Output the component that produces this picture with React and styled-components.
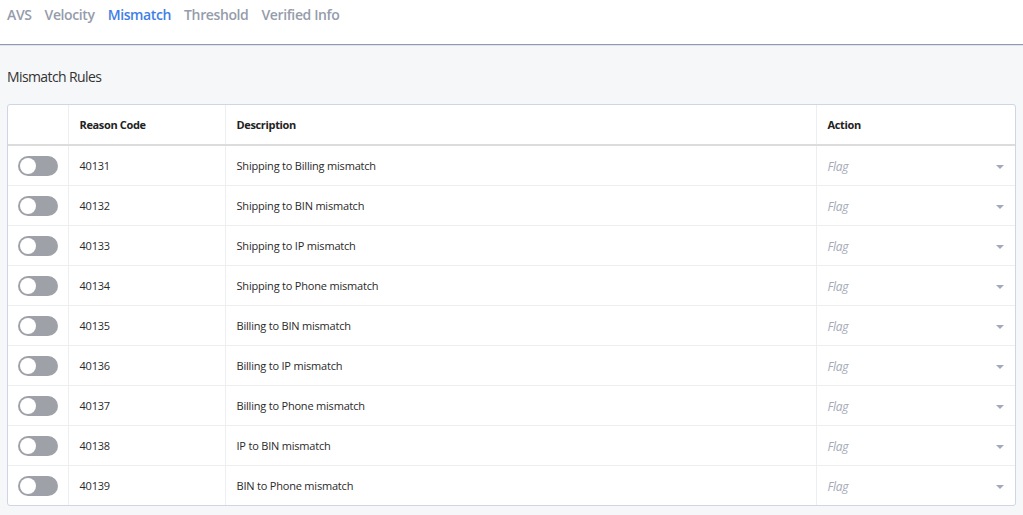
import styled, { createGlobalStyle } from 'styled-components'

const GlobalStyle = createGlobalStyle`
  html, body {
    margin: 0;
    padding: 0;
    background: #f6f7f9;
    font-family: "Open Sans", "Noto Sans", sans-serif;
  }
`

const TabBar = styled.nav`
  display: flex;
  gap: 13px;
  height: 44px;
  padding: 0 7px;
  background: #fff;
  border-bottom: 1px solid #8e9aad;
  box-shadow: 0 1px 0 #dfe3ea;
`

const Tab = styled.span`
  padding-top: 5px;
  font-size: 14px;
  font-weight: 600;
  color: ${(p) => (p.active ? '#3f7ee8' : '#959cab')};
  letter-spacing: -0.38px;
`

const Page = styled.main`
  padding: 22px 7px 8px 7px;
`

const Title = styled.h2`
  margin: 0 0 18px 0;
  font-size: 14px;
  font-weight: 400;
  color: #333;
  letter-spacing: -0.6px;
`

const TableCard = styled.div`
  background: #fff;
  border: 1px solid #cdd6e6;
  border-radius: 3px;
  overflow: hidden;
`

const Table = styled.table`
  width: 100%;
  border-collapse: collapse;
  table-layout: fixed;
`

const Th = styled.th`
  height: 39px;
  padding: 0 10px 0 11px;
  text-align: left;
  font-size: 11px;
  font-weight: 700;
  color: #222;
  letter-spacing: -0.35px;
  border-bottom: 2px solid #dcdcdc;
  border-left: 1px solid #eceef2;
  &:first-child { border-left: none; }
`

const Td = styled.td`
  height: 39px;
  padding: 0 10px 0 11px;
  font-size: 11px;
  color: #2a2a2a;
  letter-spacing: -0.2px;
  border-top: 1px solid #eceef2;
  border-left: 1px solid #eceef2;
  &:first-child { border-left: none; padding-left: 10px; }
  tr:first-child > & { border-top: none; }
`

const Toggle = styled.span`
  display: block;
  width: 40px;
  height: 20px;
  border-radius: 10px;
  background: #9ea1a8;
  position: relative;
  &::after {
    content: '';
    position: absolute;
    left: 2px;
    top: 2px;
    width: 16px;
    height: 16px;
    border-radius: 50%;
    background: #fff;
  }
`

const Select = styled.div`
  display: flex;
  align-items: center;
  justify-content: space-between;
  padding-top: 2px;
  font-style: italic;
  font-size: 12px;
  color: #a4aab8;
  letter-spacing: -0.3px;
`

const Caret = styled.span`
  width: 0;
  height: 0;
  margin-right: 1px;
  border-left: 4px solid transparent;
  border-right: 4px solid transparent;
  border-top: 4px solid #a3a9b8;
`

const rules = [
  ['40131', 'Shipping to Billing mismatch'],
  ['40132', 'Shipping to BIN mismatch'],
  ['40133', 'Shipping to IP mismatch'],
  ['40134', 'Shipping to Phone mismatch'],
  ['40135', 'Billing to BIN mismatch'],
  ['40136', 'Billing to IP mismatch'],
  ['40137', 'Billing to Phone mismatch'],
  ['40138', 'IP to BIN mismatch'],
  ['40139', 'BIN to Phone mismatch'],
]

const App = () => {
  return (
    <>
      <GlobalStyle />
      <TabBar>
        <Tab>AVS</Tab>
        <Tab>Velocity</Tab>
        <Tab active>Mismatch</Tab>
        <Tab>Threshold</Tab>
        <Tab>Verified Info</Tab>
      </TabBar>
      <Page>
        <Title>Mismatch Rules</Title>
        <TableCard>
          <Table>
            <colgroup>
              <col style={{ width: 60 }} />
              <col style={{ width: 157 }} />
              <col style={{ width: 591 }} />
              <col />
            </colgroup>
            <thead>
              <tr>
                <Th />
                <Th>Reason Code</Th>
                <Th>Description</Th>
                <Th>Action</Th>
              </tr>
            </thead>
            <tbody>
              {rules.map(([code, desc]) => (
                <tr key={code}>
                  <Td><Toggle /></Td>
                  <Td>{code}</Td>
                  <Td>{desc}</Td>
                  <Td>
                    <Select>
                      Flag
                      <Caret />
                    </Select>
                  </Td>
                </tr>
              ))}
            </tbody>
          </Table>
        </TableCard>
      </Page>
    </>
  )
}

export default App
